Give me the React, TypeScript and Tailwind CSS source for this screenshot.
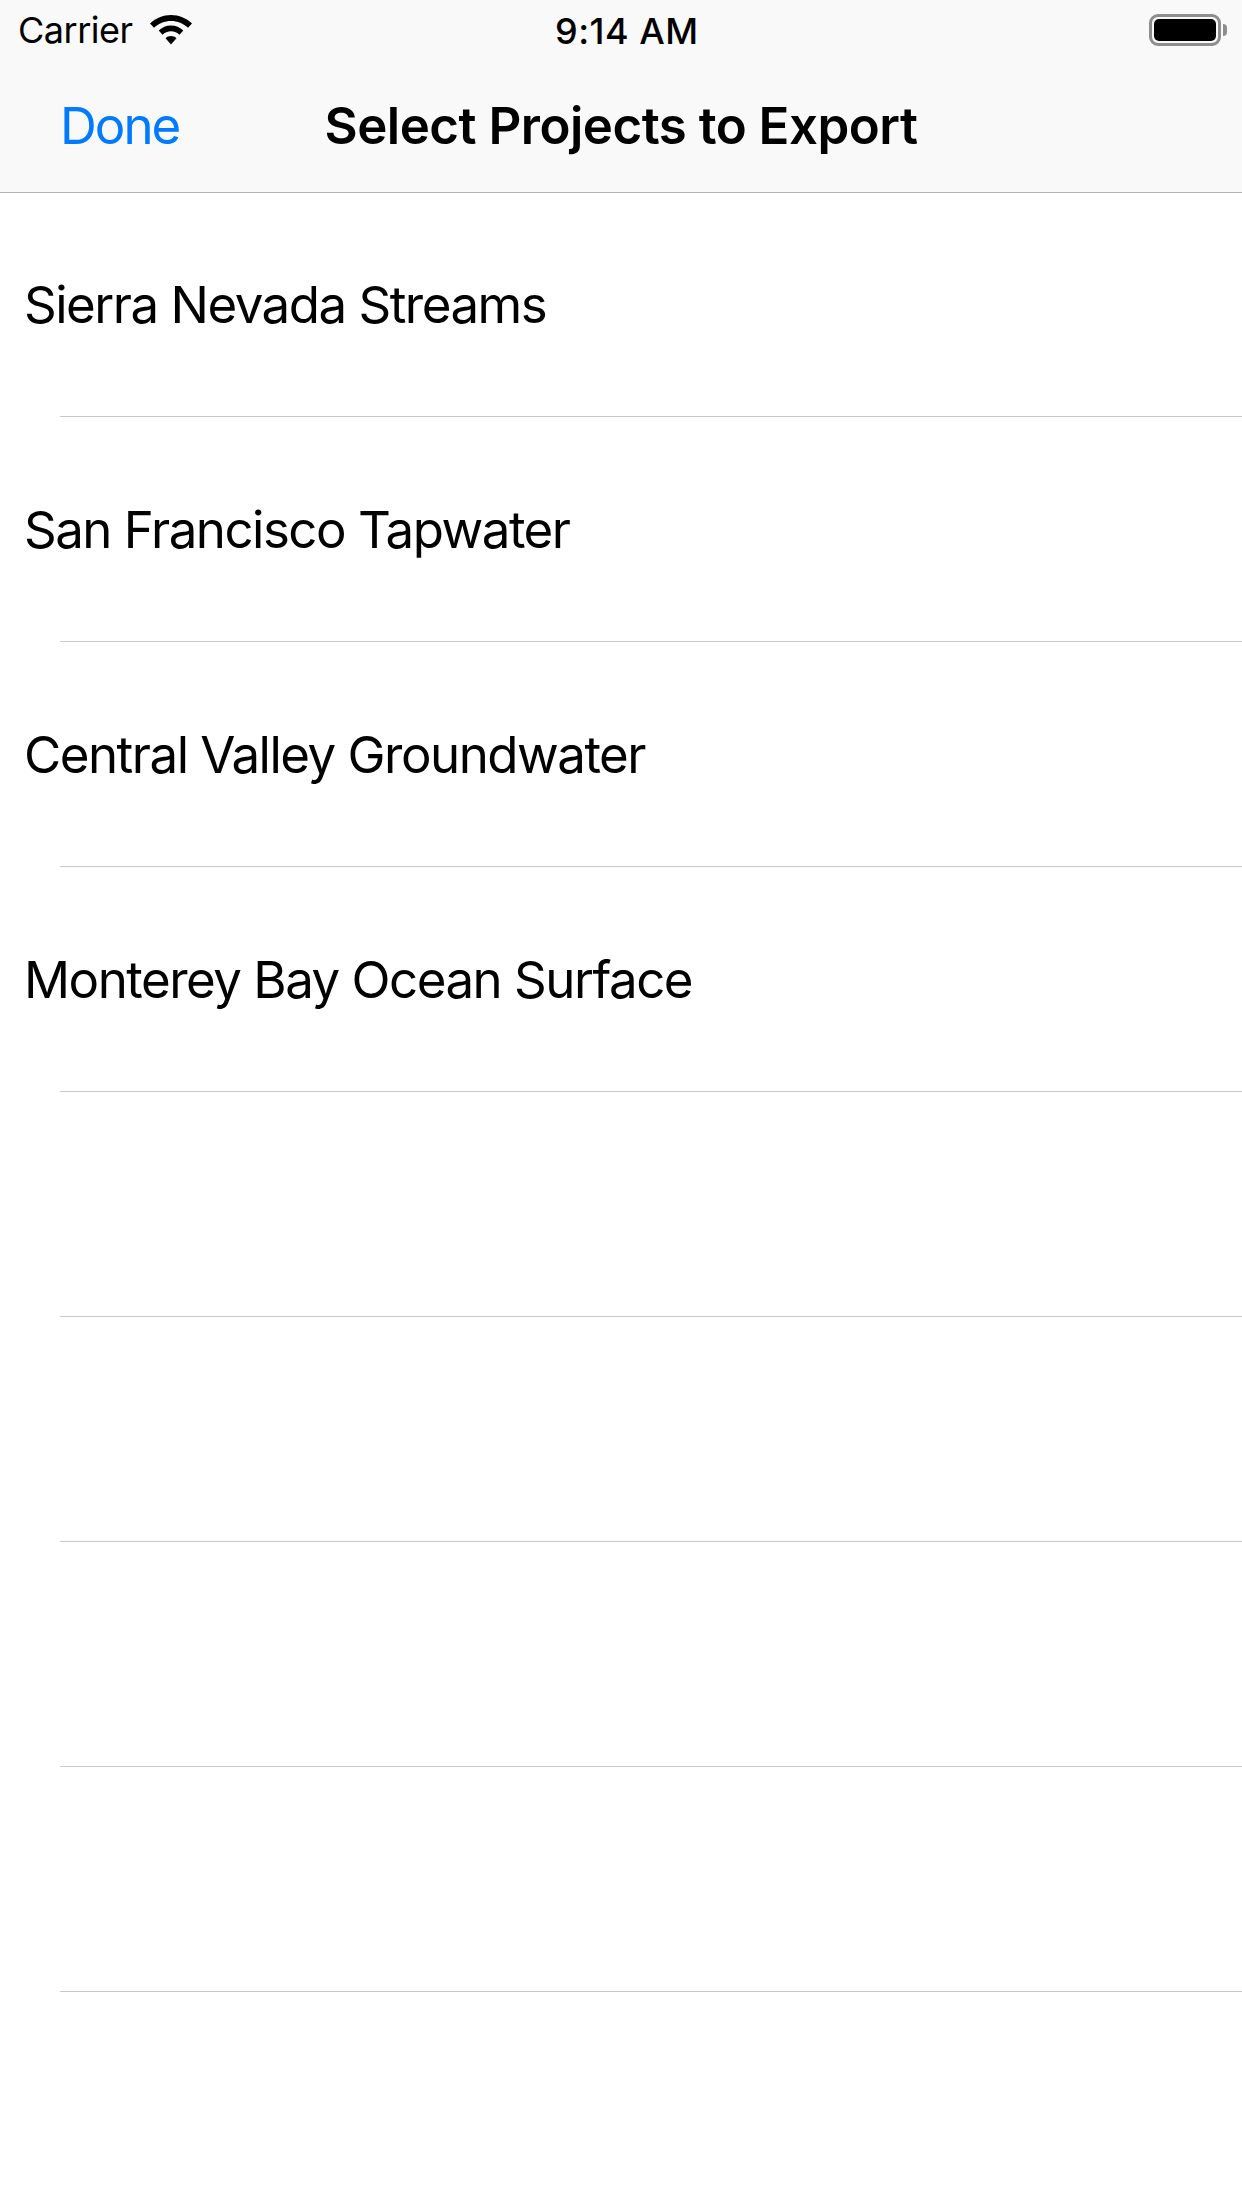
const projects = [
  "Sierra Nevada Streams",
  "San Francisco Tapwater",
  "Central Valley Groundwater",
  "Monterey Bay Ocean Surface",
  "",
  "",
  "",
  "",
]

export default function App() {
  return (
    <div className="w-[1242px] h-[2208px] bg-white text-black overflow-hidden font-['Inter',sans-serif]">
      <div className="bg-[#f9f9f9] h-[193px] border-b border-[#b2b2b2]">
        <div className="h-[60px] relative flex items-center justify-between pl-[18px] pr-[15px]">
          <div className="flex items-center gap-[17px]">
            <span className="text-[36px] leading-none tracking-[-0.5px]">Carrier</span>
            <svg width="42" height="30" viewBox="0 0 42 30" fill="#000">
              <path d="M21 0C13 0 6 3 0 8.500L4 12.800C8.600 8.600 14.500 6 21 6C27.500 6 33.400 8.600 38 12.800L42 8.500C36 3 29 0 21 0Z" />
              <path d="M21 10.500C16.300 10.500 12 12.400 8.700 15.500L12.500 19.700C14.700 17.600 17.700 16.300 21 16.300C24.300 16.300 27.300 17.600 29.500 19.700L33.300 15.500C30 12.400 25.700 10.500 21 10.500Z" />
              <path d="M21 21C18.900 21 16.900 21.800 15.500 23.200L21 29.500L26.500 23.200C25.100 21.800 23.100 21 21 21Z" />
            </svg>
          </div>
          <span className="absolute left-[555px] top-[13px] text-[36px] leading-none font-medium tracking-[0.5px]">9:14 AM</span>
          <div className="flex items-center gap-[2px]">
            <div className="w-[72px] h-[32px] rounded-[9px] border-[3px] border-[#8e8e8e] p-[2px]">
              <div className="w-full h-full bg-black rounded-[5px]" />
            </div>
            <div className="w-[4px] h-[12px] bg-[#8e8e8e] rounded-r-full" />
          </div>
        </div>
        <div className="h-[132px] relative flex items-center justify-center pb-[2px]">
          <span className="absolute left-[60px] text-[51px] leading-none text-[#007aff] tracking-[-2px]">Done</span>
          <span className="text-[51px] leading-none font-semibold tracking-[-0.5px]">Select Projects to Export</span>
        </div>
      </div>
      <div className="flex flex-col -mt-[1px]">
        {projects.map((name, i) => (
          <div key={i} className="h-[225px] relative flex items-center pl-[24px]">
            <span className="text-[51px] leading-none tracking-[-1.500px]">{name}</span>
            <div className="absolute left-[60px] right-0 bottom-0 h-[1px] bg-[#c8c7cc]" />
          </div>
        ))}
      </div>
    </div>
  )
}
